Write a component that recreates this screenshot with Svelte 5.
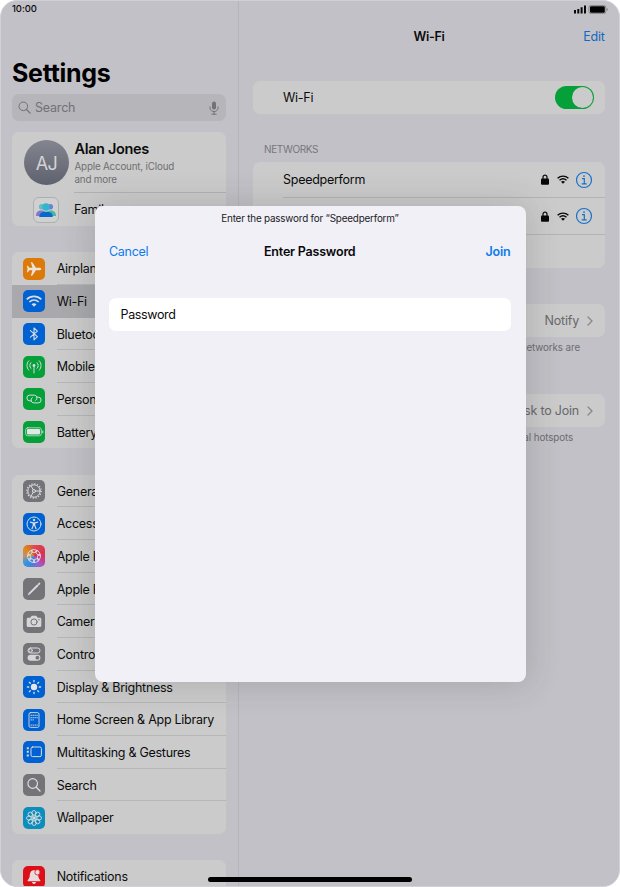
<script>
  const connectivity = [
    { name: 'Airplane Mode', icon: 'plane', color: '#dc7909' },
    { name: 'Wi-Fi', icon: 'wifi', color: '#0062d2', selected: true },
    { name: 'Bluetooth', icon: 'bluetooth', color: '#0062d2' },
    { name: 'Mobile Data', icon: 'mobile', color: '#05a03a' },
    { name: 'Personal Hotspot', icon: 'link', color: '#05a03a' },
    { name: 'Battery', icon: 'battery', color: '#05a03a' }
  ];
  const general = [
    { name: 'General', icon: 'gear', color: '#747478' },
    { name: 'Accessibility', icon: 'access', color: '#0062d2' },
    { name: 'Apple Intelligence', icon: 'ai', color: 'conic-gradient(from 0deg, #dc4a50, #dc3050 20%, #c43c90 32%, #9a60d0 42%, #4a80d8 53%, #3196df 64%, #c09070 75%, #dc8a18 86%, #dc4a50)' },
    { name: 'Apple Pencil', icon: 'pencil', color: '#747478' },
    { name: 'Camera', icon: 'camera', color: '#747478' },
    { name: 'Control Centre', icon: 'control', color: '#747478' },
    { name: 'Display & Brightness', icon: 'sun', color: '#0062d2' },
    { name: 'Home Screen & App Library', icon: 'home', color: '#0062d2' },
    { name: 'Multitasking & Gestures', icon: 'multi', color: '#0062d2' },
    { name: 'Search', icon: 'search', color: '#747478' },
    { name: 'Wallpaper', icon: 'flower', color: '#0c8dbc' }
  ];
  const alerts = [{ name: 'Notifications', icon: 'bell', color: '#dc1018' }];
  const around = (n) => Array.from({ length: n }, (_, i) => (i * 360) / n);
</script>

{#snippet glyph(icon)}
  <svg viewBox="0 0 22 22" width="22" height="22" fill="none" stroke="#d6dce0" stroke-width="1" stroke-linecap="round" stroke-linejoin="round">
    {#if icon === 'plane'}
      <path fill="#ece4dc" stroke="none" d="M18.3 11c0-.8-1.1-1.3-2.2-1.3h-3.2L9.2 4.3H7.8l1.7 5.4H6.3L4.9 7.8H3.8l.8 3.2-.8 3.2h1.1l1.4-1.9h3.2l-1.7 5.4h1.4l3.7-5.4h3.2c1.1 0 2.2-.5 2.2-1.3Z" />
    {:else if icon === 'wifi'}
      <path stroke-width="1.6" stroke-linecap="butt" d="M3.7 9.4c4.2-4 10.4-4 14.6 0M6.3 12c2.8-2.5 6.6-2.5 9.4 0" />
      <path fill="#d6dce0" stroke="none" d="M8.5 14.2c1.5-1.2 3.5-1.2 5 0L11 16.7Z" />
    {:else if icon === 'bluetooth'}
      <path stroke-width="1.1" d="m7.4 7.6 7 6-3.4 3.2V5l3.4 3.2-7 6" />
    {:else if icon === 'mobile'}
      <circle cx="11" cy="9.5" r="1.4" fill="#d6dce0" stroke="none" />
      <path d="M11 10.5V17M7.9 6.7c-1.6 1.6-1.6 4 0 5.6M14.1 6.7c1.6 1.6 1.6 4 0 5.6M5.8 4.8c-2.5 2.6-2.5 6.8 0 9.4M16.2 4.8c2.5 2.6 2.5 6.8 0 9.4" />
    {:else if icon === 'link'}
      <path d="M8.3 12.9H6.800a2.900 2.900 0 0 1 0-5.800h4.300a2.900 2.900 0 0 1 1.600 5.300M13.700 9.100h1.500a2.900 2.900 0 0 1 0 5.800h-4.300a2.900 2.900 0 0 1-1.600-5.300" />
    {:else if icon === 'battery'}
      <rect x="2.7" y="6.8" width="15.6" height="8" rx="2" stroke-width=".8" />
      <rect x="4" y="8.1" width="13" height="5.4" rx="1" fill="#e1e8e2" stroke="none" />
      <path d="M19.8 10v1.8" />
    {:else if icon === 'gear'}
      <circle cx="11" cy="11" r="6.2" />
      <circle cx="11" cy="11" r="7.2" stroke-width="1.2" stroke-dasharray="1.2 1.627" stroke-linecap="butt" />
      <circle cx="11" cy="11" r="1.5" />
      <path d="M12.5 11H17M10.2 9.7 8 5.8M10.2 12.3 8 16.2" />
    {:else if icon === 'access'}
      <circle cx="11" cy="11" r="7" />
      <circle cx="11" cy="7" r="1.2" fill="#d6dce0" stroke="none" />
      <path stroke-width="1.2" d="M7.3 9.2 10 9.8h2l2.7-.6M10.3 10v2.4L9 15.7M11.7 10v2.4l1.3 3.3M11 10v2.2" />
    {:else if icon === 'ai'}
      {#each around(7) as a}
        <ellipse cx="11" cy="6" rx="3.1" ry="1.5" stroke-width=".9" transform="rotate({a} 11 11)" />
      {/each}
    {:else if icon === 'pencil'}
      <path stroke-width="1.9" stroke-linecap="butt" d="m6.3 15.7 8.7-8.7" />
      <path stroke-width="1.9" d="m15.8 6.2.6-.6" />
      <path fill="#d6dce0" stroke="none" d="m4.7 17.3.9-2.3 1.4 1.4Z" />
    {:else if icon === 'camera'}
      <path fill="#d6d6d8" stroke="none" d="M5.2 6.7h2.1l1-1.5c.2-.3.5-.4.8-.4h3.8c.3 0 .6.1.8.4l1 1.5h2.1c.9 0 1.5.6 1.5 1.5v6.3c0 .9-.6 1.5-1.5 1.5H5.2c-.9 0-1.5-.6-1.5-1.5V8.2c0-.9.6-1.5 1.5-1.5Z" />
      <circle cx="11" cy="11" r="3.1" stroke="#747478" />
      <circle cx="16" cy="8.7" r=".7" fill="#747478" stroke="none" />
    {:else if icon === 'control'}
      <rect x="5" y="5" width="12" height="5" rx="2.5" />
      <circle cx="7.6" cy="7.5" r="1.7" />
      <rect x="4.6" y="11.7" width="12.8" height="6" rx="3" fill="#d6d6d8" stroke="none" />
      <circle cx="14.4" cy="14.7" r="1.9" fill="#747478" stroke="none" />
    {:else if icon === 'sun'}
      <circle cx="11" cy="11" r="3.2" fill="#e4e8ea" stroke="none" />
      {#each around(8) as a}
        <path stroke-width="1.3" d="M11 4.4v1.3" transform="rotate({a} 11 11)" />
      {/each}
    {:else if icon === 'home'}
      <rect x="6" y="3.6" width="10" height="14.8" rx="1.5" stroke-width=".9" />
      <path stroke-width="1.2" stroke-dasharray="1.1 .9" stroke-linecap="butt" d="M7.6 6.3h7M7.6 8.6h7M7.6 10.9h3.5M7.6 16.2h7" />
    {:else if icon === 'multi'}
      <rect x="8" y="6" width="10.4" height="9.6" rx="1.5" />
      <path stroke-width="2" stroke-linecap="butt" d="M3.8 7.2h2M3.8 10.8h2M3.8 14.4h2" />
    {:else if icon === 'search'}
      <circle cx="9.7" cy="9.5" r="4.8" stroke-width="1.2" />
      <path stroke-width="1.4" d="m13.3 13.2 3.7 3.7" />
    {:else if icon === 'flower'}
      {#each around(8) as a}
        <ellipse cx="11" cy="5.9" rx="2.1" ry="2.4" stroke-width=".9" transform="rotate({a} 11 11)" />
        <path stroke-width=".8" d="M11 8.3V11" transform="rotate({a} 11 11)" />
      {/each}
      <circle cx="11" cy="11" r="1.5" fill="#d6dce0" stroke="none" />
    {:else if icon === 'bell'}
      <path fill="#e8dcdc" stroke="none" d="M11 4.3c-2.9 0-4 2.3-4.2 4.7-.2 2.6-.8 3.7-1.9 4.9-.6.7-.2 1.4.6 1.4h11c.8 0 1.2-.7.6-1.4-1.1-1.2-1.7-2.3-1.9-4.9-.2-2.4-1.3-4.7-4.2-4.7ZM9 16h4c-.2 1.3-1 1.9-2 1.9S9.2 17.3 9 16Z" />
      <circle cx="14.5" cy="6.3" r="2.7" fill="#e8dcdc" stroke="#dc1018" stroke-width=".8" />
    {/if}
  </svg>
{/snippet}

{#snippet menu(items)}
  <ul class="card menu">
    {#each items as item}
      <li class:selected={item.selected}>
        <span class="tile" style:background={item.color}>{@render glyph(item.icon)}</span>
        <span class="name">{item.name}</span>
      </li>
    {/each}
  </ul>
{/snippet}

{#snippet networkIcons()}
  <svg class="lock" viewBox="0 0 8 11" width="8" height="11"><path d="M2 5V3.2a2 2 0 0 1 4 0V5" fill="none" stroke="#080808" stroke-width="1.2" /><rect y="4.6" width="8" height="6.2" rx="1" fill="#080808" /></svg>
  <svg class="signal" viewBox="0 0 12 9" width="12" height="9"><path d="M.6 3.3c3.1-2.9 7.7-2.9 10.8 0M2.5 5.3c2.1-1.9 4.9-1.9 7 0" fill="none" stroke="#080808" stroke-width="1.4" /><path d="M4 6.8c1.2-1 2.8-1 4 0L6 8.8Z" fill="#080808" /></svg>
  <svg viewBox="0 0 18 18" width="18" height="18" fill="none" stroke="#1670ca" stroke-width="1.2"><circle cx="9" cy="9" r="7.5" /><path d="M7 7.7h2.3v5M6.7 12.9h5" /><circle cx="9" cy="5.1" r=".9" fill="#1670ca" stroke="none" /></svg>
{/snippet}

{#snippet chevron()}
  <svg viewBox="0 0 6 10" width="6" height="10"><path d="m1 1 4 4-4 4" fill="none" stroke="#88888b" stroke-width="1.3" stroke-linecap="round" /></svg>
{/snippet}

<div class="screen">
  <aside>
    <div class="time">10:00</div>
    <h1>Settings</h1>
    <div class="search">
      <svg viewBox="0 0 13 13" width="13" height="13" fill="none" stroke="#727276"><circle cx="5.3" cy="5.3" r="4.3" /><path d="m8.5 8.5 3.6 3.6" stroke-width="1.2" stroke-linecap="round" /></svg>
      <span>Search</span>
      <svg viewBox="0 0 10 14" width="10" height="14" fill="none" stroke="#727276"><rect x="3" y=".6" width="4" height="7.8" rx="2" fill="#727276" stroke="none" /><path d="M1 5.5v1.3c0 5 8 5 8 0V5.5M5 10.5v2.7M2.5 13.2h5" /></svg>
    </div>
    <section class="card profile">
      <div class="account">
        <div class="avatar">AJ</div>
        <div><h2>Alan Jones</h2><p>Apple Account, iCloud<br />and more</p></div>
      </div>
      <div class="family">
        <svg viewBox="0 0 26 26" width="26" height="26">
          <rect x=".5" y=".5" width="25" height="25" rx="5.5" fill="#cfd0cf" stroke="#acb0ae" />
          <circle cx="8.7" cy="9.8" r="2.8" fill="#60bfc4" /><path d="M3 19c0-4 2-5.5 5.3-5.5S13 15.5 13 19Z" fill="#8975d0" />
          <circle cx="17.3" cy="9.8" r="2.8" fill="#6984d6" /><path d="M13 19c0-4 2-5.5 4.7-5.5S23 15 23 19Z" fill="#43b6a1" />
          <circle cx="13" cy="10" r="3.7" fill="#33b5cb" /><path d="M6.3 20c-.3-3.5 2.3-5.2 6.7-5.2s7 1.7 6.7 5.2Z" fill="#0869cd" />
        </svg>
        <span>Family</span>
      </div>
    </section>
    {@render menu(connectivity)}
    {@render menu(general)}
    {@render menu(alerts)}
  </aside>

  <main>
    <div class="status">
      <svg viewBox="0 0 34 9" width="34" height="9"><path d="M0 5h2v3.5H0ZM3.3 4h2v4.5h-2ZM6.6 2.3h2v6.2h-2ZM10 .5h2v8h-2Z" fill="#080808" /><rect x="14.9" y=".4" width="17" height="8.2" rx="2.3" fill="none" stroke="#77777a" stroke-width=".8" /><rect x="16" y="1.2" width="14.8" height="6.6" rx="1.3" /><path d="M33.2 3.5v2" stroke="#77777a" /></svg>
    </div>
    <header><span></span><b>Wi-Fi</b><span class="edit">Edit</span></header>
    <section class="card toggle-row"><span>Wi-Fi</span><div class="toggle"><i></i></div></section>
    <h3>NETWORKS</h3>
    <section class="card networks">
      <div class="network"><span>Speedperform</span>{@render networkIcons()}</div>
      <div class="network"><span></span>{@render networkIcons()}</div>
      <div class="network last"></div>
    </section>
    <section class="card option"><span>Notify</span>{@render chevron()}</section>
    <p class="hint">networks are</p>
    <section class="card option second"><span>Ask to Join</span>{@render chevron()}</section>
    <p class="hint short">personal hotspots</p>
  </main>

  <div class="dialog">
    <p class="prompt">Enter the password for “Speedperform”</p>
    <div class="actions"><span>Cancel</span><b>Enter Password</b><b class="join">Join</b></div>
    <div class="field">Password</div>
  </div>
  <div class="indicator"></div>
</div>

<style>
  :global(body) { margin: 0; background: #fff; }
  * { box-sizing: border-box; }
  h1, h2, h3, p, ul { margin: 0; padding: 0; }
  svg { display: block; flex: none; }
  .screen {
    position: relative; display: flex; width: 620px; height: 887px; overflow: hidden;
    border: 1px solid #d0d0d5; border-radius: 17px; background: #c2c1c7;
    font: 12.5px/16px Inter, "Liberation Sans", sans-serif; letter-spacing: -.27px; color: #0b0b0c; white-space: nowrap;
  }
  aside { width: 238px; flex: none; padding: 0 12px 0 11px; border-right: 1px solid #b6b5bb; }
  .time { height: 16px; font-size: 9.5px; font-weight: 500; letter-spacing: -.1px; }
  h1 { margin-top: 41px; height: 32px; font-size: 25px; line-height: 30px; font-weight: 700; letter-spacing: -.3px; color: #000; }
  .search { display: flex; align-items: center; margin-top: 4px; height: 27px; padding: 0 7px 0 6px; border-radius: 7px; background: #b5b5ba; color: #727276; letter-spacing: -.2px; }
  .search span { flex: 1; margin-left: 4px; }
  .card { border-radius: 7px; background: #cbcbcb; overflow: hidden; }
  .profile { height: 94px; margin-top: 11px; }
  .account { display: flex; height: 61px; padding: 8px 0 0 12px; position: relative; }
  .account::after { content: ""; position: absolute; left: 62px; right: 0; bottom: 0; height: 1px; background: #b1b3b2; }
  .avatar { width: 45px; height: 45px; margin-right: 5.5px; border-radius: 50%; background: linear-gradient(#83858f, #5e626e); color: #d2d3d6; font-size: 18px; line-height: 47px; text-align: center; letter-spacing: -.5px; }
  h2 { font-size: 14.5px; line-height: 18px; font-weight: 600; letter-spacing: -.35px; }
  .account p { margin-top: 1.5px; font-size: 9.8px; line-height: 13.3px; letter-spacing: -.18px; color: #6e6f70; }
  .family { display: flex; align-items: center; height: 33px; padding-left: 21px; gap: 15px; }
  .menu { list-style: none; margin-top: 26.3px; }
  .menu li { display: flex; align-items: center; height: 32.68px; padding-left: 11px; }
  .profile + .menu { margin-top: 26.4px; }
  .tile { width: 22px; height: 22px; border-radius: 5px; flex: none; }
  .name { display: flex; flex: 1; align-items: center; align-self: stretch; margin-left: 11.7px; padding-top: 2px; border-bottom: 1px solid #b5b6b6; }
  li:last-child .name, .selected .name { border-color: transparent; }
  .selected { background: #a9a9ad; }

  main { flex: 1; padding: 0 14px; }
  .status { display: flex; justify-content: flex-end; height: 16px; padding: 3.5px 0 0; margin-right: -3px; }
  header { display: grid; grid-template-columns: 1fr auto 1fr; height: 16px; margin-top: 11.5px; }
  header b { font-weight: 600; }
  .edit { padding-right: .5px; text-align: right; color: #1268c0; }
  .toggle-row { display: flex; align-items: center; height: 33px; margin-top: 36.5px; padding: 0 11.5px 0 30px; }
  .toggle-row span { flex: 1; }
  .toggle { display: flex; justify-content: flex-end; width: 39px; height: 23px; padding: 1px; border-radius: 12px; background: #05a03a; }
  .toggle i { width: 21px; height: 21px; border-radius: 50%; background: #cbcbcb; }
  h3 { margin: 27px 0 0 11px; font-size: 10px; font-weight: 400; letter-spacing: -.35px; color: #77777c; }
  .networks { margin-top: 4.5px; height: 106px; }
  .network { display: flex; align-items: center; height: 36.5px; margin-left: 30px; padding: 1px 12px 0 0; border-bottom: 1px solid #b3b3b5; }
  .network span { flex: 1; }
  .network .lock { margin-right: 8px; }
  .network .signal { margin-right: 6.5px; }
  .last { border: 0; }
  .option { display: flex; align-items: center; justify-content: flex-end; height: 33px; margin-top: 36.5px; padding-right: 12px; gap: 8px; color: #68686b; letter-spacing: -.2px; }
  .hint { height: 16px; margin-top: 3px; padding-right: 25px; text-align: right; font-size: 9.8px; letter-spacing: -.1px; color: #6c6c70; }
  .second { margin-top: 38px; }
  .short { margin-top: 3px; padding-right: 32px; }

  .dialog { position: absolute; left: 93.5px; top: 205px; width: 431px; height: 475.5px; padding: 4px 14.5px; border-radius: 8px; background: #f1f0f6; box-shadow: 0 0 32px 4px rgba(40, 50, 40, .16); }
  .prompt { text-align: center; font-size: 9.9px; letter-spacing: -.2px; color: #202024; }
  .actions { display: grid; grid-template-columns: 1fr auto 1fr; margin-top: 18px; padding-right: .5px; color: #0b7bed; }
  .actions b { font-weight: 600; letter-spacing: -.2px; color: #08080a; }
  .actions .join { color: #0b7bed; text-align: right; }
  .field { height: 33px; margin-top: 38px; padding: 0 11.5px; border-radius: 7px; background: #fff; line-height: 34px; letter-spacing: -.35px; }
  .indicator { position: absolute; left: 207px; top: 876px; width: 204px; height: 5px; border-radius: 3px; background: #000; }
</style>
